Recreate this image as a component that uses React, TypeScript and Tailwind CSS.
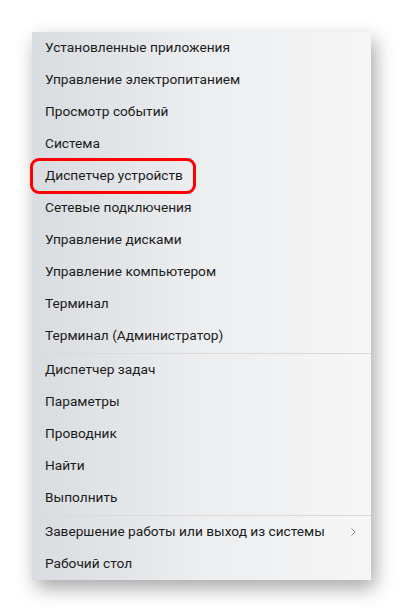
import React from 'react';

const groupA = [
  'Установленные приложения',
  'Управление электропитанием',
  'Просмотр событий',
  'Система',
  'Диспетчер устройств',
  'Сетевые подключения',
  'Управление дисками',
  'Управление компьютером',
  'Терминал',
  'Терминал (Администратор)',
];

const groupB = ['Диспетчер задач', 'Параметры', 'Проводник', 'Найти', 'Выполнить'];

function Item({ label, highlighted, submenu }: { label: string; highlighted?: boolean; submenu?: boolean }) {
  return (
    <div className="relative flex h-8 items-center justify-between pl-[13px] pr-[14px]">
      <span className="text-[13.7px] leading-none text-[#1b1b1b]">{label}</span>
      {submenu && (
        <svg width="8" height="10" viewBox="0 0 8 10" className="text-[#8a8a8a]">
          <path d="M2.5 1.5 L6 5 L2.5 8.5" fill="none" stroke="currentColor" strokeWidth="1" />
        </svg>
      )}
      {highlighted && (
        <div className="pointer-events-none absolute left-[-2px] top-[-2px] h-[36px] w-[166px] rounded-[9px] border-[3px] border-[#ff0000]" />
      )}
    </div>
  );
}

function Separator() {
  return (
    <div className="flex h-[2px] items-center">
      <div className="h-px w-full bg-[#dadada]" />
    </div>
  );
}

export default function App() {
  return (
    <div className="min-h-[612px] w-[403px] bg-white pl-[32px] pt-[32px]" style={{ fontFamily: 'Roboto, "Noto Sans", sans-serif' }}>
      <div className="w-[339px] bg-gradient-to-r from-[#d9dce0] via-[#eceef0] to-[#f6f6f6] shadow-[4px_8px_18px_rgba(0,0,0,0.35)]">
        {groupA.map((l) => (
          <Item key={l} label={l} highlighted={l === 'Диспетчер устройств'} />
        ))}
        <Separator />
        {groupB.map((l) => (
          <Item key={l} label={l} />
        ))}
        <Separator />
        <Item label="Завершение работы или выход из системы" submenu />
        <Item label="Рабочий стол" />
      </div>
    </div>
  );
}
